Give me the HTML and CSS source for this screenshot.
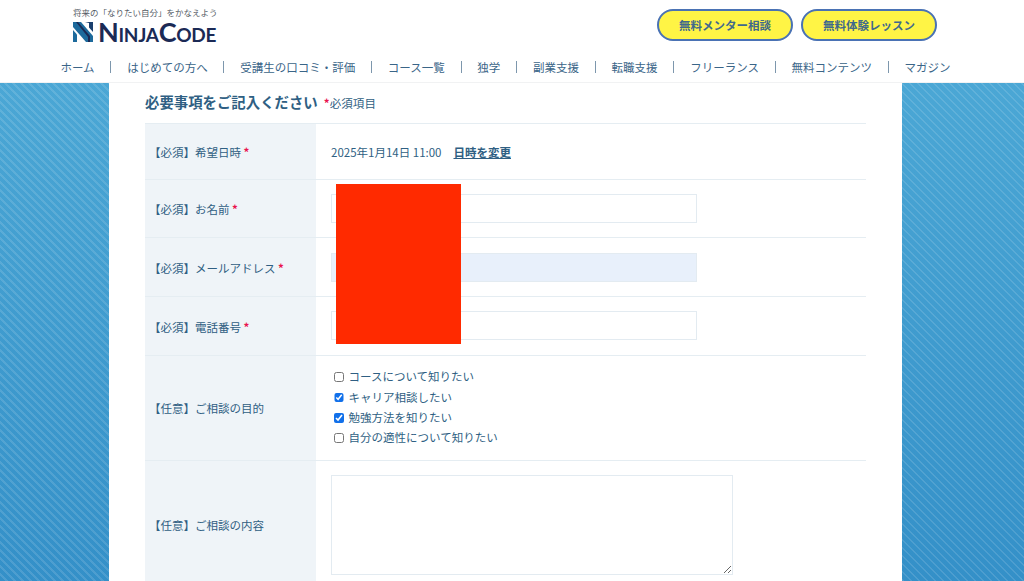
FILE: index.html
```html
<!DOCTYPE html>
<html lang="ja">
<head>
<meta charset="utf-8">
<title>NinjaCode</title>
<link rel="stylesheet" href="styles.css">
</head>
<body>
<header class="site-header">
  <div class="header-top">
    <a class="logo">
      <span class="logo-tag">将来の「なりたい自分」をかなえよう</span>
      <span class="logo-main">
        <svg class="logo-mark" viewBox="0 0 20 20" width="20" height="20" aria-hidden="true">
          <polygon points="0,0 8,0 20,14 20,20 13,20 0,5" fill="#1d6a9c"/>
          <polygon points="0,8 4,12.5 4,20 0,20" fill="#1d6a9c"/>
          <polygon points="12,0 20,0 20,10 16,5.5 16,1" fill="#1b3f6e"/>
          <polygon points="3,0 5,0 17,14 17,20 15,20 15,15" fill="#1b2a55"/>
        </svg>
        <span class="logo-word">NinjaCode</span>
      </span>
    </a>
    <div class="header-buttons">
      <a class="cta">無料メンター相談</a>
      <a class="cta">無料体験レッスン</a>
    </div>
  </div>
  <nav class="nav">
    <a>ホーム</a><a>はじめての方へ</a><a>受講生の口コミ・評価</a><a>コース一覧</a><a>独学</a><a>副業支援</a><a>転職支援</a><a>フリーランス</a><a>無料コンテンツ</a><a>マガジン</a>
  </nav>
</header>
<main class="stage">
  <section class="panel">
    <h1 class="title">必要事項をご記入ください<small class="title-note"><i class="req">*</i>必須項目</small></h1>
    <form class="form">
      <div class="row row-date">
        <div class="label">【必須】希望日時 <i class="req">*</i></div>
        <div class="value">2025年1月14日 11:00<a class="change">日時を変更</a></div>
      </div>
      <div class="row row-field">
        <div class="label">【必須】お名前 <i class="req">*</i></div>
        <div class="value"><input class="input" type="text"></div>
      </div>
      <div class="row row-field">
        <div class="label">【必須】メールアドレス <i class="req">*</i></div>
        <div class="value"><input class="input input-filled" type="text"></div>
      </div>
      <div class="row row-field">
        <div class="label">【必須】電話番号 <i class="req">*</i></div>
        <div class="value"><input class="input" type="text"></div>
      </div>
      <div class="row row-checks">
        <div class="label">【任意】ご相談の目的</div>
        <div class="value checks">
          <label class="check"><input type="checkbox">コースについて知りたい</label>
          <label class="check"><input type="checkbox" checked>キャリア相談したい</label>
          <label class="check"><input type="checkbox" checked>勉強方法を知りたい</label>
          <label class="check"><input type="checkbox">自分の適性について知りたい</label>
        </div>
      </div>
      <div class="row row-text">
        <div class="label">【任意】ご相談の内容</div>
        <div class="value"><textarea class="textarea"></textarea></div>
      </div>
    </form>
    <div class="redaction"></div>
  </section>
</main>
</body>
</html>
```

FILE: styles.css
```css
* { box-sizing: border-box; }
html, body { margin: 0; height: 581px; overflow: hidden; }
body {
  font-family: "Noto Sans CJK JP", "Noto Sans", sans-serif;
  font-size: 11.5px;
  color: #2f5f83;
  background: #fff;
  display: flex;
  flex-direction: column;
}
.site-header {
  height: 83px;
  flex: none;
  background: #fff;
  border-bottom: 1px solid #f1f2f3;
}
.header-top {
  height: 52px;
  padding: 6px 87px 0 73px;
  display: flex;
  justify-content: space-between;
  align-items: flex-start;
}
.logo { display: flex; flex-direction: column; width: 146px; }
.logo-tag { font-size: 8.5px; line-height: 12px; color: #555c66; white-space: nowrap; }
.logo-main { display: flex; align-items: center; gap: 5px; height: 24px; margin-top: 2px; }
.logo-mark { flex: none; }
.logo-word {
  font-family: "Lato", "Liberation Sans", sans-serif;
  font-variant: small-caps;
  font-weight: 700;
  font-size: 27px;
  line-height: 24px;
  letter-spacing: -0.3px;
  color: #1b2a55;
}
.header-buttons { display: flex; gap: 8px; padding-top: 3px; }
.cta {
  width: 136px;
  height: 32px;
  display: flex;
  align-items: center;
  justify-content: center;
  background: #fff445;
  border: 2px solid #4a72b4;
  border-radius: 16px;
  font-weight: 700;
  color: #41698c;
}
.nav {
  display: flex;
  justify-content: center;
  padding: 9px 13px 0 0;
}
.nav a {
  height: 12px;
  line-height: 12px;
  padding: 0 15.8px;
  color: #3a6588;
  white-space: nowrap;
}
.nav a + a { border-left: 1px solid #7d97ad; }
.stage {
  flex: 1;
  min-height: 0;
  padding: 0 122px 0 109px;
  background-color: #4294cc;
  background-image:
    repeating-linear-gradient(45deg, rgba(255,255,255,0) 0, rgba(255,255,255,0) 4px, rgba(255,255,255,.12) 4px, rgba(255,255,255,.12) 5.66px),
    linear-gradient(180deg, #4ba7d5 0%, #3490c8 100%);
}
.panel {
  position: relative;
  height: 100%;
  background: #fff;
  padding: 0 36px;
  overflow: hidden;
}
.title {
  margin: 0;
  height: 40px;
  padding-top: 8px;
  font-size: 14.4px;
  line-height: 22px;
  font-weight: 700;
  color: #2f5f83;
  white-space: nowrap;
}
.title-note { font-size: 11.5px; font-weight: 400; margin-left: 6px; letter-spacing: 0.1px; }
.req { color: #e9154f; font-style: normal; font-weight: 700; }
.form { border-top: 1px solid #e5edf2; }
.row {
  display: grid;
  grid-template-columns: 171px 1fr;
  border-bottom: 1px solid #e5edf2;
}
.row-date { height: 55.6px; }
.row-field { height: 58.7px; }
.row-checks { height: 105px; }
.row-date .label, .row-date .value, .row-field .label { padding-top: 2px; }
.label {
  background: #eff4f8;
  display: flex;
  align-items: center;
  padding-left: 4px;
  white-space: pre;
}
.value { display: flex; align-items: center; padding-left: 15px; }
.change {
  margin-left: 12px;
  font-weight: 700;
  text-decoration: underline;
}
.input {
  width: 366px;
  height: 29px;
  border: 1px solid #e3ebf1;
  background: #fff;
  border-radius: 0;
  outline: 0;
  padding: 0 8px;
}
.input-filled { background: #e8f0fb; }
.checks { flex-direction: column; align-items: flex-start; justify-content: center; }
.check { display: flex; align-items: center; height: 20.3px; line-height: 20px; color: #2f5f83; position: relative; top: -1px; }
.check input { width: 9.5px; height: 9.5px; margin: 2px 5px 0 3px; accent-color: #1170ea; }
.row-text { height: 130px; }
.row-text .value { align-items: flex-start; padding-top: 14px; }
.textarea {
  width: 402px;
  height: 100px;
  border: 1px solid #e3ebf1;
  background: #fff;
  border-radius: 0;
  outline: 0;
  display: block;
}
.redaction {
  position: absolute;
  left: 227px;
  top: 101px;
  width: 125px;
  height: 159.5px;
  background: #ff2a00;
}
```
